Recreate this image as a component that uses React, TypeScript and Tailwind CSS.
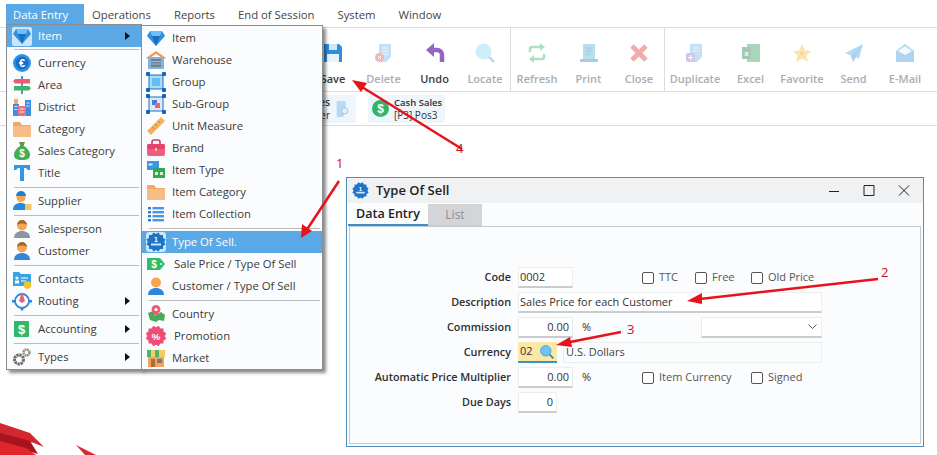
import React from "react";

const S = ({ children, size = 20, className = "" }: { children: React.ReactNode; size?: number; className?: string }) => (
  <svg width={size} height={size} viewBox="0 0 20 20" className={`shrink-0 ${className}`}>
    {children}
  </svg>
);

const Glyph = ({ x = 10, y = 14, s = 11, c = "#fff", t }: { x?: number; y?: number; s?: number; c?: string; t: string }) => (
  <text x={x} y={y} fontSize={s} fontWeight={700} fill={c} textAnchor="middle" fontFamily="'Liberation Sans', sans-serif">
    {t}
  </text>
);

const Diamond = ({ halo = false }: { halo?: boolean }) => (
  <S>
    {halo && <rect x="0" y="1" width="20" height="19" rx="2" fill="#fff" opacity="0.7" />}
    <polygon points="4,3 16,3 19,8 10,18 1,8" fill="#2f8fe0" />
    <polygon points="6,8 14,8 10,18" fill="#1b6fc0" />
    <polygon points="4,3 16,3 14,8 6,8" fill="#6cc0f5" />
  </S>
);
const Warehouse = () => (
  <S>
    <polygon points="10,1 20,8 18,9 10,4 2,9 0,8" fill="#ee9a5a" />
    <rect x="2" y="7" width="16" height="12" fill="#7fb5dc" />
    <rect x="5" y="9" width="10" height="8" fill="#6f7f92" />
    <path d="M5 11.5h10M5 14h10" stroke="#a8b4c2" />
  </S>
);
const Group = ({ inner = false }: { inner?: boolean }) => (
  <S>
    <rect x="3" y="3" width="14" height="14" fill={inner ? "#dce9f8" : "#a6dcf8"} stroke="#1f6fc4" />
    {inner ? (
      <>
        <rect x="6" y="6" width="5" height="5" fill="#4a7fd0" />
        <rect x="9" y="9" width="5" height="5" fill="#ec5f7e" />
      </>
    ) : (
      <rect x="6" y="6" width="8" height="8" fill="#65bdf0" />
    )}
    {[2, 18].map((x) => [2, 18].map((y) => <rect key={`${x}${y}`} x={x - 2} y={y - 2} width="4" height="4" rx="1" fill="#1565bd" />))}
  </S>
);
const Ruler = () => (
  <S>
    <polygon points="15,1 19,5 5,19 1,15" fill="#f3b25e" />
    <path d="M12 5l2 2M9 8l2 2M6 11l2 2" stroke="#b9813a" />
  </S>
);
const Brand = () => (
  <S>
    <path d="M6 7V4a2 2 0 012-2h4a2 2 0 012 2v3" fill="none" stroke="#d8366a" strokeWidth="1.6" />
    <rect x="1" y="6" width="18" height="12" rx="2" fill="#f25b86" />
    <rect x="1" y="6" width="18" height="5" rx="2" fill="#e4436f" />
    <rect x="9" y="10" width="2" height="3" fill="#ffd25e" />
  </S>
);
const ItemType = () => (
  <S>
    <rect x="1" y="1" width="12" height="9" fill="#3d93e6" />
    <rect x="2.5" y="3.5" width="4" height="2" fill="#d5ebfb" />
    <rect x="7" y="8" width="12" height="10" fill="#35a84f" />
    <rect x="9" y="12" width="3" height="3" fill="#d2f0d8" />
    <rect x="14" y="12" width="3" height="3" fill="#d2f0d8" />
  </S>
);
const Folder = () => (
  <S>
    <path d="M1 4a1 1 0 011-1h6l2 3h8a1 1 0 011 1v10a1 1 0 01-1 1H2a1 1 0 01-1-1z" fill="#f2a869" />
    <rect x="1" y="7" width="18" height="11" rx="1" fill="#f8bd84" />
  </S>
);
const ListIcon = () => (
  <S>
    {[3, 7, 11, 15].map((y) => (
      <React.Fragment key={y}>
        <rect x="2" y={y} width="3" height="2.4" fill="#2f7fd8" />
        <rect x="6.5" y={y} width="11.5" height="2.4" fill="#4b97e4" />
      </React.Fragment>
    ))}
  </S>
);
const Seal = ({ size = 20, fill = "#1d74c9", halo = false }: { size?: number; fill?: string; halo?: boolean }) => (
  <S size={size}>
    {halo && <rect x="0" y="0" width="20" height="20" rx="3" fill="#fff" opacity="0.7" />}
    {[0, 30, 60].map((a) => (
      <rect key={a} x="3" y="3" width="14" height="14" fill={fill} transform={`rotate(${a} 10 10)`} />
    ))}
    <Glyph y={10} s={7} t="1" />
    <rect x="5" y="11.5" width="10" height="2" fill="#cfe6fa" />
  </S>
);
const Tag = () => (
  <S>
    <path d="M1 4h13l5 6-5 6H1z" fill="#2ebd6b" />
    <Glyph x={8} y={14} s={10} t="$" />
    <circle cx="15" cy="10" r="1" fill="#fff" />
  </S>
);
const Person = ({ body = "#2f86dc", skin = "#f6a64e", hair = "" }: { body?: string; skin?: string; hair?: string }) => (
  <S>
    <circle cx="10" cy="6.5" r="5" fill={skin} />
    {hair && <path d="M5 6a5 5 0 0110 0c-2-2-8-2-10 0z" fill={hair} />}
    <path d="M2 19c0-5 4-7 8-7s8 2 8 7z" fill={body} />
  </S>
);
const Country = () => (
  <S>
    <path d="M2 9l5-2 2 5 6-4 4 3-1 6-5-1-3 2-6-2z" fill="#49a95c" />
    <path d="M10 1a4.500 4.500 0 014.500 4.500C14.500 8 10 12 10 12S5.500 8 5.500 5.500A4.500 4.500 0 0110 1z" fill="#ea5a76" />
    <circle cx="10" cy="5.500" r="1.600" fill="#fff" />
  </S>
);
const Promotion = () => (
  <S>
    {[0, 30, 60].map((a) => (
      <rect key={a} x="2.500" y="2.500" width="15" height="15" fill="#ee4d78" transform={`rotate(${a} 10 10)`} />
    ))}
    <Glyph y={13.500} s={9.500} t="%" />
  </S>
);
const Market = () => (
  <S>
    <rect x="2" y="8" width="16" height="11" fill="#f0a25e" />
    <rect x="5" y="11" width="4" height="8" fill="#b06a3a" />
    <rect x="11" y="11" width="5" height="4" fill="#6b7c8c" />
    {[1, 5, 9, 13].map((x, i) => (
      <rect key={x} x={x} y="2" width="4" height="7" fill={i % 2 ? "#f4cd62" : "#4fb560"} />
    ))}
    <rect x="17" y="2" width="2" height="7" fill="#f4cd62" />
  </S>
);
const Currency = () => (
  <S>
    <circle cx="10" cy="10" r="9" fill="#2b93e8" />
    <circle cx="10" cy="10" r="6.500" fill="#1a6fc9" />
    <Glyph y={14} s={11} t="€" />
  </S>
);
const Area = () => (
  <S>
    <rect x="9" y="1" width="2" height="18" fill="#4795d8" />
    <polygon points="3,4 18,4 18,8.500 3,8.500 1,6.200" fill="#ec5a78" />
    <polygon points="2,11 17,11 19,13.200 17,15.500 2,15.500" fill="#45b26a" />
  </S>
);
const District = () => (
  <S>
    <rect x="1" y="7" width="6" height="12" fill="#3d8de0" />
    <rect x="13" y="3" width="6" height="16" fill="#3d8de0" />
    <rect x="6" y="9" width="8" height="10" fill="#ef6d80" />
    <path d="M2.500 9.500h3M2.500 12.500h3M14.500 6h3M14.500 9h3M7.500 12h5M7.500 15h5" stroke="#dcecfb" strokeWidth="1.200" />
    <rect x="2" y="2" width="4" height="5" fill="#f2a869" />
  </S>
);
const MoneyBag = () => (
  <S>
    <path d="M7 1h6l-1.500 4h-3z" fill="#6b8f3a" />
    <path d="M8 5h4c3 2 6 5 6 9 0 3-2 5-8 5s-8-2-8-5c0-4 3-7 6-9z" fill="#46ad57" />
    <Glyph y={16} s={10} t="$" />
  </S>
);
const TitleIcon = () => (
  <S>
    <path d="M2 2h16v5h-2l-2-2h-2v13H8V5H6L4 7H2z" fill="#3196e3" />
  </S>
);
const Supplier = () => (
  <S>
    <circle cx="9" cy="6.500" r="4.500" fill="#f6a64e" />
    <path d="M4 5a5 5 0 0110 0z" fill="#1f7fd4" />
    <path d="M1 19c0-5 3-7 8-7 3 0 5 1 6 3v4z" fill="#2a86d8" />
    <rect x="13" y="13" width="6.500" height="6" fill="#f4c560" />
  </S>
);
const Contacts = () => (
  <S>
    <path d="M1 3h6l2 2h9a1 1 0 011 1v11H1z" fill="#3ba3e2" />
    <circle cx="5" cy="9" r="1.600" fill="#fff" />
    <rect x="3" y="11.500" width="4" height="3" fill="#fff" />
    <path d="M9 9h7M9 12h5" stroke="#bfe3f8" strokeWidth="1.500" />
    <circle cx="15.500" cy="16" r="3.800" fill="#f6c322" />
  </S>
);
const Routing = () => (
  <S>
    <circle cx="10" cy="10" r="7" fill="#fff" stroke="#2c84dc" strokeWidth="1.800" />
    <polygon points="10,1 13,10 10,12 7,10" fill="#e9636c" />
    <rect x="0" y="9" width="3" height="2.500" fill="#2c84dc" />
    <rect x="17" y="9" width="3" height="2.500" fill="#2c84dc" />
    <rect x="8.800" y="16.500" width="2.500" height="3" fill="#2c84dc" />
  </S>
);
const Dollar = () => (
  <S>
    <rect x="2" y="2" width="15" height="16" rx="1" fill="#2eb868" />
    <Glyph x={9.500} y={15} s={13} t="$" />
  </S>
);
const Gears = () => (
  <S>
    <circle cx="7" cy="12.500" r="4.500" fill="none" stroke="#6e6e6e" strokeWidth="3" strokeDasharray="2.400 .6" />
    <circle cx="14.500" cy="5.500" r="3" fill="none" stroke="#9a8a70" strokeWidth="2.400" strokeDasharray="1.800 .6" />
  </S>
);

type Row = { label: string; icon?: React.ReactNode; more?: boolean; active?: boolean; sep?: number; pad?: boolean };

const mainMenu: Row[] = [
  { label: "Item", icon: <Diamond halo />, more: true, active: true },
  { sep: 5, label: "" },
  { label: "Currency", icon: <Currency /> },
  { label: "Area", icon: <Area /> },
  { label: "District", icon: <District /> },
  { label: "Category", icon: <Folder /> },
  { label: "Sales Category", icon: <MoneyBag /> },
  { label: "Title", icon: <TitleIcon /> },
  { sep: 6, label: "" },
  { label: "Supplier", icon: <Supplier /> },
  { sep: 6, label: "" },
  { label: "Salesperson", icon: <Person body="#8b95a3" hair="#a8642c" /> },
  { label: "Customer", icon: <Person hair="#a8642c" /> },
  { sep: 6, label: "" },
  { label: "Contacts", icon: <Contacts /> },
  { label: "Routing", icon: <Routing />, more: true },
  { sep: 6, label: "" },
  { label: "Accounting", icon: <Dollar />, more: true },
  { sep: 6, label: "" },
  { label: "Types", icon: <Gears />, more: true },
];

const subMenu: Row[] = [
  { label: "Item", icon: <Diamond /> },
  { label: "Warehouse", icon: <Warehouse /> },
  { label: "Group", icon: <Group /> },
  { label: "Sub-Group", icon: <Group inner /> },
  { label: "Unit Measure", icon: <Ruler /> },
  { label: "Brand", icon: <Brand /> },
  { label: "Item Type", icon: <ItemType /> },
  { label: "Item Category", icon: <Folder /> },
  { label: "Item Collection", icon: <ListIcon /> },
  { sep: 6, label: "" },
  { label: "Type Of Sell.", icon: <Seal halo />, active: true },
  { label: "Sale Price / Type Of Sell", icon: <Tag />, pad: true },
  { label: "Customer / Type Of Sell", icon: <Person /> },
  { sep: 6, label: "" },
  { label: "Country", icon: <Country /> },
  { label: "Promotion", icon: <Promotion />, pad: true },
  { label: "Market", icon: <Market /> },
];

const Menu = ({ rows, sub, className }: { rows: Row[]; sub?: boolean; className: string }) => (
  <div className={`absolute z-10 flex flex-col border border-[#8a8d90] bg-[#fbfcfe] shadow-[3px_3px_3px_rgba(0,0,0,0.45)] ${className}`}>
    {rows.map((r, i) =>
      r.sep ? (
        <div key={i} className="flex items-center pl-[7px] pr-[2px]" style={{ height: r.sep }}>
          <div className="h-px w-full bg-[#b9bcbf]" />
        </div>
      ) : (
        <div key={i} className={`flex h-[22px] items-center ${sub ? "pl-[4px]" : "pl-[5px]"} ${r.active ? "bg-[#5aa9e6] text-white" : "text-[#3a3a3a]"}`}>
          <span className="flex w-[26px] shrink-0">{r.icon}</span>
          <span className={`flex-1 whitespace-nowrap ${r.pad ? "pl-[2px]" : ""}`}>{r.label}</span>
          {r.more && (
            <svg width="5" height="8" viewBox="0 0 5 8" className="mr-[11px]">
              <polygon points="0,0 5,4 0,8" fill="#111" />
            </svg>
          )}
        </div>
      ),
    )}
  </div>
);

const Tool = ({ label, w, off, sepAfter, children }: { label: string; w: string; off?: boolean; sepAfter?: boolean; children: React.ReactNode }) => (
  <div className={`flex shrink-0 flex-col items-center ${w} ${sepAfter ? "border-r border-[#dcdde0]" : ""}`}>
    <div className={`mt-[15px] flex h-[20px] items-center ${off ? "opacity-40" : ""}`}>{children}</div>
    <span className={`mt-[8px] text-[11px] font-semibold whitespace-nowrap ${off ? "text-[#a9adb2]" : "text-[#3c3c3c]"}`}>{label}</span>
  </div>
);

const DocBase = () => <path d="M5 1h12v13l-5 5H5z" fill="#6fb4ea" />;

const Field = ({ label, children }: { label: string; children: React.ReactNode }) => (
  <>
    <div className="flex h-[25px] items-center justify-end text-[10.8px] font-semibold text-[#2e2e2e]">{label}</div>
    <div className="flex h-[25px] items-center">{children}</div>
  </>
);

const Input = ({ w, right, children }: { w: string; right?: boolean; children?: React.ReactNode }) => (
  <div className={`flex h-[21px] items-center border border-b-2 border-[#eceded] border-b-[#c9cbcd] bg-white px-px text-[#333] ${w} ${right ? "justify-end pr-[3px]" : ""}`}>
    {children}
  </div>
);

const Check = ({ label, w }: { label: string; w: string }) => (
  <div className={`flex items-center gap-[5px] text-[#555] ${w}`}>
    <span className="size-[12px] rounded-[2px] border border-[#555] bg-white" />
    <span className="whitespace-nowrap">{label}</span>
  </div>
);

export default function App() {
  return (
    <div className="relative h-[455px] w-[937px] overflow-hidden bg-white font-['Open_Sans','Liberation_Sans',sans-serif] text-[11.3px]">
      {/* menu bar */}
      <div className="flex h-[27px] items-start pl-[6px] pt-[4px] text-[#444]">
        <div className="flex h-[22px] w-[78px] items-center bg-[#5aa9e6] pl-[7px] text-white">Data Entry</div>
        <div className="flex h-[22px] items-center gap-[23px] pl-[8px]">
          {["Operations", "Reports", "End of Session", "System", "Window"].map((m) => (
            <span key={m}>{m}</span>
          ))}
        </div>
      </div>

      {/* toolbar */}
      <div className="flex h-[65px] border-y border-[#dcdde0] pl-[308px]">
        <Tool label="Save" w="w-[50px]">
          <S>
            <path d="M1 1h15l3 3v15H1z" fill="#2f8ee0" />
            <rect x="6" y="1" width="8" height="6" fill="#cfe6f8" />
            <rect x="4" y="11" width="12" height="8" fill="#e8f2fa" />
          </S>
        </Tool>
        <Tool label="Delete" w="w-[51px]" off>
          <S>
            <DocBase />
            <path d="M8 5h6M8 8h6M8 11h6" stroke="#d8edfb" />
            <circle cx="5.500" cy="14.500" r="4.500" fill="#e24b4b" />
            <path d="M4 13l3 3M7 13l-3 3" stroke="#fff" />
          </S>
        </Tool>
        <Tool label="Undo" w="w-[51px]">
          <S>
            <polygon points="1,7 9,0 9,14" fill="#9465c4" />
            <path d="M8 7h4a5 5 0 015 5v7" fill="none" stroke="#9465c4" strokeWidth="4.500" />
          </S>
        </Tool>
        <Tool label="Locate" w="w-[51px]" off sepAfter>
          <S>
            <circle cx="8.500" cy="8.500" r="8" fill="#8bd6f2" />
            <path d="M14 14l5 5" stroke="#5b8fb5" strokeWidth="2.200" />
          </S>
        </Tool>
        <Tool label="Refresh" w="w-[52px]" off>
          <S>
            <path d="M3 9V6a2 2 0 012-2h9M17 11v3a2 2 0 01-2 2H6" fill="none" stroke="#2fb46a" strokeWidth="2.500" />
            <polygon points="13,0 18,4 13,8" fill="#2fb46a" />
            <polygon points="7,12 2,16 7,20" fill="#2fb46a" />
          </S>
        </Tool>
        <Tool label="Print" w="w-[51px]" off>
          <S>
            <rect x="4" y="1" width="12" height="16" fill="#4bb4d8" />
            <path d="M6.500 5h7M6.500 8h7M6.500 11h5" stroke="#1f6f96" />
            <rect x="1" y="16" width="18" height="3" rx="1" fill="#2b7fb0" />
          </S>
        </Tool>
        <Tool label="Close" w="w-[51px]" off sepAfter>
          <S>
            <path d="M3 3l14 14M17 3L3 17" stroke="#e0323a" strokeWidth="4.800" />
          </S>
        </Tool>
        <Tool label="Duplicate" w="w-[60px]" off>
          <S>
            <DocBase />
            <path d="M8 5h6M8 8h6" stroke="#d8edfb" />
            <rect x="1" y="10" width="9" height="9" rx="2" fill="#9a6ad0" />
            <path d="M5.500 12v5M3 14.500h5" stroke="#fff" />
          </S>
        </Tool>
        <Tool label="Excel" w="w-[51px]" off>
          <S>
            <rect x="6" y="1" width="13" height="18" fill="#2d9a55" />
            <rect x="1" y="4" width="9" height="12" fill="#1d7a40" />
            <Glyph x={5.500} y={13} s={8} t="x" />
          </S>
        </Tool>
        <Tool label="Favorite" w="w-[52px]" off>
          <S>
            <polygon points="10,1 12.800,7.200 19,8 14.500,12.500 15.800,19 10,15.800 4.200,19 5.500,12.500 1,8 7.200,7.200" fill="#f7c32e" />
            <path d="M10 8.500v4M8 10.500h4" stroke="#ea6a78" strokeWidth="1.200" />
          </S>
        </Tool>
        <Tool label="Send" w="w-[51px]" off>
          <S>
            <polygon points="19,1 1,10 7,12.500 9,19 12,14 15,16" fill="#45ace8" />
            <polygon points="19,1 7,12.500 9,19" fill="#2b8fd0" />
          </S>
        </Tool>
        <Tool label="E-Mail" w="w-[52px]" off>
          <S>
            <path d="M1 8l9-7 9 7v11H1z" fill="#3498e0" />
            <polygon points="3,8 10,3 17,8 10,12" fill="#e4f2fc" />
          </S>
        </Tool>
      </div>

      {/* open forms strip */}
      <div className="flex h-[34px] items-center gap-[12px] border-b border-[#dcdde0] pl-[268px]">
        <div className="flex h-[28px] w-[88px] items-center justify-end gap-[4px] rounded-[3px] bg-[#eef5fb] pr-[4px]">
          <div className="flex flex-col items-end text-[10px] leading-[13px] text-[#333]">
            <span className="font-semibold">Sales</span>
            <span>Customer</span>
          </div>
          <S size={18} className="opacity-50">
            <path d="M3 1h10v12l-3 6H3z" fill="#7fc0ef" />
            <circle cx="12" cy="12" r="3.500" fill="#d5ecfa" stroke="#4f91c5" />
          </S>
        </div>
        <div className="flex h-[28px] w-[77px] items-center gap-[5px] rounded-[3px] bg-[#eef5fb] pl-[4px]">
          <S size={17}>
            <circle cx="10" cy="10" r="10" fill="#2fb46a" />
            <Glyph y={15} s={14} t="$" />
          </S>
          <div className="flex flex-col text-[9.5px] leading-[13px] text-[#333]">
            <span className="font-semibold">Cash Sales</span>
            <span className="text-[10px]">[P3] Pos3</span>
          </div>
        </div>
      </div>

      {/* dropdown menus */}
      <Menu rows={mainMenu} className="left-[6px] top-[24px] w-[136px] pb-px" />
      <Menu rows={subMenu} sub className="left-[141px] top-[25px] w-[182px] pt-px" />

      {/* form window */}
      <div className="absolute left-[346px] top-[177px] flex h-[270px] w-[578px] flex-col border border-[#4f8fbd] bg-[#fbfcfe]">
        <div className="flex h-[25px] items-center bg-[#f0f1f2] pl-[5px]">
          <Seal size={17} />
          <span className="ml-[7px] flex-1 text-[13px] font-semibold text-[#222]">Type Of Sell</span>
          <svg width="82" height="14" viewBox="0 0 82 14" className="mr-[12px]">
            <path d="M0 7.500h10M35 1.500h10v10H35zM70 1.500l10 10M80 1.500l-10 10" fill="none" stroke="#222" />
          </svg>
        </div>
        <div className="flex h-[23px] items-end pl-px">
          <div className="flex h-[22px] w-[80px] items-center justify-center border-b-2 border-[#3d8fc4] text-[12.5px] font-semibold text-[#222]">Data Entry</div>
          <div className="flex h-[22px] w-[54px] items-center justify-center border-b border-[#c5cad0] bg-[#d3d5d9] text-[12px] text-[#8c8f93]">List</div>
        </div>
        <div className="mx-[2px] mb-[2px] flex-1 border border-[#c5cad0] pt-[38px] text-[11px]">
          <div className="grid grid-cols-[161px_1fr] gap-x-[7px]">
            <Field label="Code">
              <Input w="w-[55px]">0002</Input>
              <div className="ml-[69px] flex">
                <Check label="TTC" w="w-[53px]" />
                <Check label="Free" w="w-[56px]" />
                <Check label="Old Price" w="w-[80px]" />
              </div>
            </Field>
            <Field label="Description">
              <Input w="w-[304px]">Sales Price for each Customer</Input>
            </Field>
            <Field label="Commission">
              <Input w="w-[55px]" right>0.00</Input>
              <span className="ml-[9px] w-[119px] text-[#333]">%</span>
              <div className="flex h-[21px] w-[121px] items-center justify-end border border-b-2 border-[#eceded] border-b-[#c9cbcd] bg-white pr-[4px]">
                <svg width="9" height="6" viewBox="0 0 9 6">
                  <path d="M.5.500l4 4 4-4" fill="none" stroke="#555" />
                </svg>
              </div>
            </Field>
            <Field label="Currency">
              <div className="flex h-[21px] w-[39px] items-center justify-between border-b-2 border-[#3d8fc4] bg-[#f9e8a6] px-[2px] text-[#333]">
                02
                <S size={16}>
                  <circle cx="8.500" cy="8.500" r="6.500" fill="#6fc3ee" stroke="#3d9bd6" />
                  <path d="M13 13l5 5" stroke="#3f7fa8" strokeWidth="2" />
                </S>
              </div>
              <div className="ml-[6px] flex h-[21px] w-[259px] items-center border border-[#eceded] px-[2px] text-[#444]">U.S. Dollars</div>
            </Field>
            <Field label="Automatic Price Multiplier">
              <Input w="w-[55px]" right>0.00</Input>
              <span className="ml-[9px] w-[60px] text-[#333]">%</span>
              <Check label="Item Currency" w="w-[109px]" />
              <Check label="Signed" w="w-[60px]" />
            </Field>
            <Field label="Due Days">
              <Input w="w-[39px]" right>0</Input>
            </Field>
          </div>
        </div>
      </div>

      {/* corner artwork */}
      <svg width="130" height="45" viewBox="0 0 130 45" className="absolute bottom-0 left-0">
        <polygon points="0,13 30,23 44,37 34,33 0,24" fill="#d3262e" />
        <polygon points="0,23 30,31 38,44 0,33" fill="#a8141e" />
        <polygon points="0,31 26,38 36,45 0,45" fill="#e0252c" />
        <polygon points="76,35 96,45 85,45" fill="#dc2a30" />
      </svg>

      {/* callouts */}
      <svg width="937" height="455" viewBox="0 0 937 455" className="pointer-events-none absolute left-0 top-0 z-20">
        <g stroke="#e8121c" strokeWidth="2.500" fill="#e8121c">
          <line x1="339" y1="181" x2="306" y2="231" />
          <polygon points="301,238 302,224 312,231" stroke="none" />
          <line x1="878" y1="279" x2="700" y2="299" />
          <polygon points="687,301 702,293 702,304" stroke="none" />
          <line x1="621" y1="332" x2="565" y2="343" />
          <polygon points="556,345 570,337 572,347" stroke="none" />
          <line x1="462" y1="149" x2="362" y2="87" />
          <polygon points="352,80 367,83 361,92" stroke="none" />
        </g>
      </svg>
      <span className="absolute left-[336px] top-[154px] z-20 text-[13px] text-[#cc1018]">1</span>
      <span className="absolute left-[881px] top-[263px] z-20 text-[13px] text-[#cc1018]">2</span>
      <span className="absolute left-[627px] top-[320px] z-20 text-[13px] text-[#cc1018]">3</span>
      <span className="absolute left-[456px] top-[139px] z-20 text-[13px] text-[#cc1018]">4</span>
    </div>
  );
}
